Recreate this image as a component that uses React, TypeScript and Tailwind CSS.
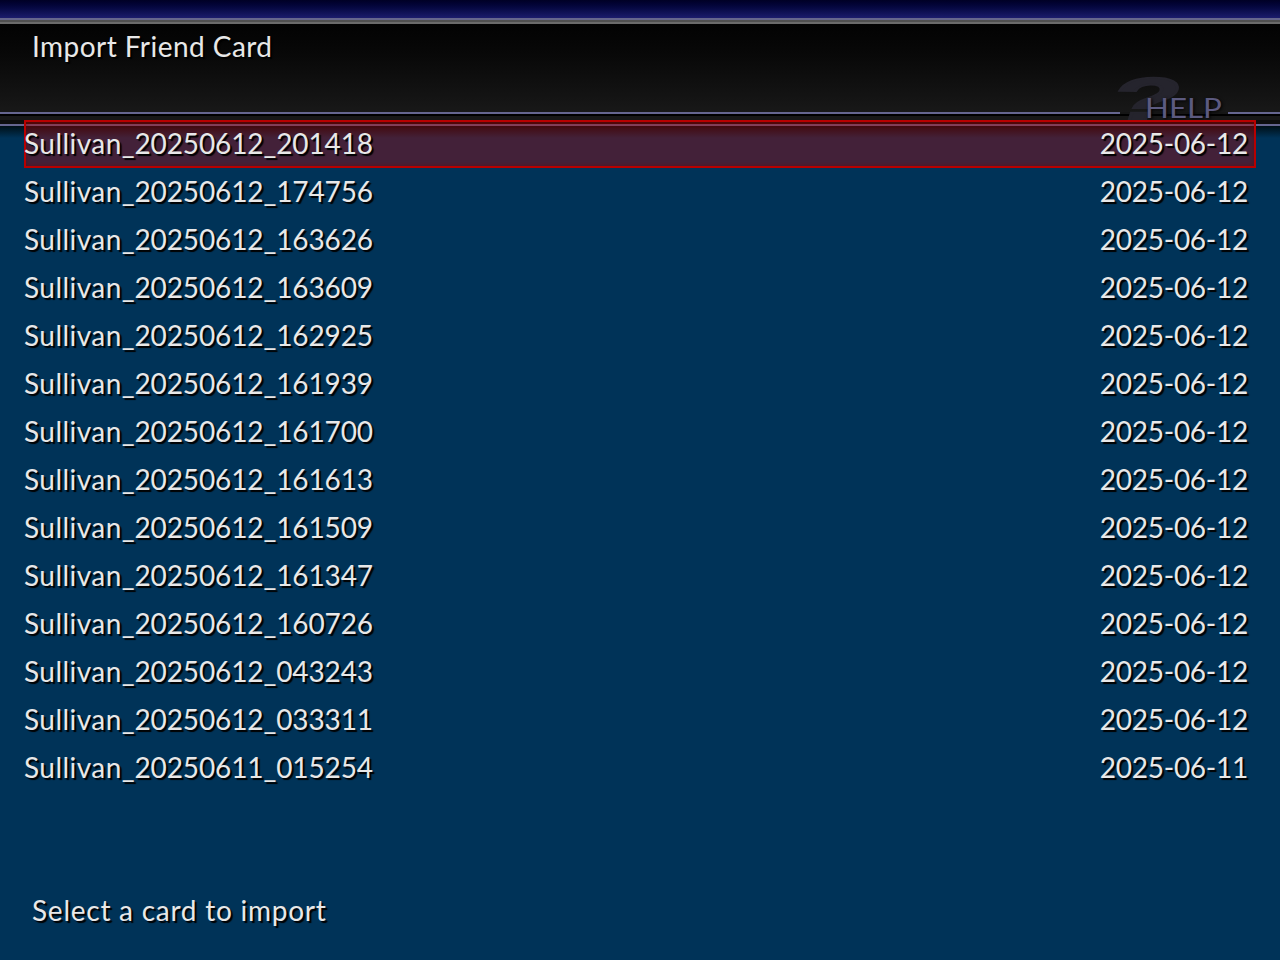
import clsx from "clsx";

const cards = [
  { id: "20250612_201418", date: "2025-06-12" },
  { id: "20250612_174756", date: "2025-06-12" },
  { id: "20250612_163626", date: "2025-06-12" },
  { id: "20250612_163609", date: "2025-06-12" },
  { id: "20250612_162925", date: "2025-06-12" },
  { id: "20250612_161939", date: "2025-06-12" },
  { id: "20250612_161700", date: "2025-06-12" },
  { id: "20250612_161613", date: "2025-06-12" },
  { id: "20250612_161509", date: "2025-06-12" },
  { id: "20250612_161347", date: "2025-06-12" },
  { id: "20250612_160726", date: "2025-06-12" },
  { id: "20250612_043243", date: "2025-06-12" },
  { id: "20250612_033311", date: "2025-06-12" },
  { id: "20250611_015254", date: "2025-06-11" },
];

interface CardRowProps {
  id: string;
  date: string;
  selected: boolean;
}

function CardRow({ id, date, selected }: CardRowProps) {
  return (
    <li
      className={clsx(
        "flex h-12 items-start justify-between pr-2 leading-[47px]",
        selected &&
          "bg-[#c00000]/35 shadow-[inset_0_0_0_2px_#b80000,inset_0_0_4px_3px_rgba(110,0,0,0.35)]"
      )}
    >
      <span>
        <span className="tracking-[0.45px]">Sullivan</span>
        <span className="tracking-[-0.12px]">_{id}</span>
      </span>
      <span className="tracking-[-0.25px]">{date}</span>
    </li>
  );
}

function Header() {
  return (
    <header>
      <div className="h-[18px] bg-linear-to-b from-[#000025] to-[#1c1c6c]" />
      <div className="h-0.5 bg-[#66668c]" />
      <div className="h-0.5 bg-[#505050]" />
      <div className="h-0.5 bg-[#6b6b6b]" />

      <div className="h-[88px] bg-linear-to-b from-[#030303] to-[#181818] pl-8">
        <h1 className="leading-[44px] tracking-[0.45px]">Import Friend Card</h1>
      </div>

      <div className="relative flex h-0.5 justify-between bg-[#161616]">
        <div className="w-[1120px] bg-[#666690]" />
        <div className="w-[52px] bg-[#666690]" />
        <span className="absolute -top-[44px] left-[1112px] origin-left -skew-x-[10deg] scale-x-[1.8] font-['Liberation_Sans'] text-[62px] leading-[64px] font-bold text-[#25242d] [-webkit-text-stroke:2px_#25242d] text-shadow-none">
          ?
        </span>
        <span className="absolute -top-5 left-[1145px] origin-left scale-x-[1.16] text-[27px] leading-[32px] text-[#5c5a80] text-shadow-[1px_1px_3px_#000]">
          HELP
        </span>
      </div>
      <div className="h-0.5 bg-black" />
      <div className="h-1 bg-[#181818]" />
      <div className="h-1 bg-[#0e0e0e]" />
      <div className="h-0.5 bg-[#666690]" />
      <div className="h-3 bg-linear-to-b from-[#001018] to-[#003358]" />
    </header>
  );
}

function App() {
  return (
    <div className="flex h-[960px] w-[1280px] flex-col overflow-hidden bg-[#003358] font-['Lato',sans-serif] text-[28px] text-[#e8e8e8] text-shadow-[2px_2px_1px_#000]">
      <Header />

      {/* the list starts over the lower edge of the header */}
      <main className="relative -mt-[18px] flex-1 px-6">
        <ul>
          {cards.map((card, i) => (
            <CardRow key={card.id} {...card} selected={i === 0} />
          ))}
        </ul>
      </main>

      <footer className="h-[74px] pl-8 leading-[48px] tracking-[0.75px]">
        Select a card to import
      </footer>
    </div>
  );
}

export default App;
